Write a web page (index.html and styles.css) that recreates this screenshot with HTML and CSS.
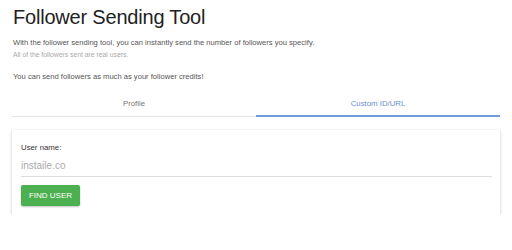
FILE: index.html
```html
<!DOCTYPE html>
<html>
<head>
<meta charset="utf-8">
<link rel="stylesheet" href="styles.css">
</head>
<body>
<div class="page">
  <h1 class="title">Follower Sending Tool</h1>
  <p class="lead">With the follower sending tool, you can instantly send the number of followers you specify.</p>
  <p class="note">All of the followers sent are real users.</p>
  <p class="lead credits">You can send followers as much as your follower credits!</p>
  <div class="tabs">
    <div class="tab">Profile</div>
    <div class="tab active">Custom ID/URL</div>
  </div>
  <div class="card">
    <label class="label">User name:</label>
    <div class="input">instaile.co</div>
    <button class="btn">FIND USER</button>
  </div>
</div>
</body>
</html>
```
FILE: styles.css
```css
* { box-sizing: border-box; }
body {
  margin: 0;
  background: #fff;
  font-family: "Liberation Sans", Arial, sans-serif;
  color: #333;
}
.page {
  padding: 3px 12px 0 12px;
  width: 512px;
}
.title {
  margin: 0;
  font-size: 20px;
  font-weight: normal;
  color: #222;
  line-height: 28px;
  letter-spacing: -0.2px;
  padding-left: 1px;
}
.lead {
  margin: 6px 0 0 1px;
  font-size: 7.6px;
  line-height: 12px;
  color: #555;
}
.note {
  margin: 1px 0 0 1px;
  font-size: 6.8px;
  line-height: 10px;
  color: #aaa;
}
.credits {
  margin-top: 11px;
}
.tabs {
  display: flex;
  margin-top: 8px;
}
.tab {
  flex: 1;
  text-align: center;
  font-size: 7.8px;
  color: #777;
  height: 26px;
  line-height: 25px;
  border-bottom: 1px solid #e4e4e4;
}
.tab.active {
  color: #6a8fd6;
  border-bottom: 2px solid #6d9bdc;
}
.card {
  margin-top: 13px;
  background: #fff;
  box-shadow: 0 1px 3px rgba(0,0,0,0.22);
  padding: 13px 8px 9px 9px;
  display: flex;
  flex-direction: column;
  align-items: flex-start;
}
.label {
  font-size: 7.8px;
  color: #333;
  line-height: 10px;
}
.input {
  width: 100%;
  font-size: 10px;
  color: #aaa;
  padding: 6px 0 4px 0;
  border-bottom: 1px solid #ddd;
  line-height: 13px;
}
.btn {
  margin-top: 8px;
  background: #4caf50;
  color: #fff;
  border: none;
  border-radius: 2px;
  font-family: inherit;
  font-size: 8px;
  height: 21px;
  width: 59px;
  padding: 0;
  box-shadow: 0 1px 2px rgba(0,0,0,0.25);
}
```
